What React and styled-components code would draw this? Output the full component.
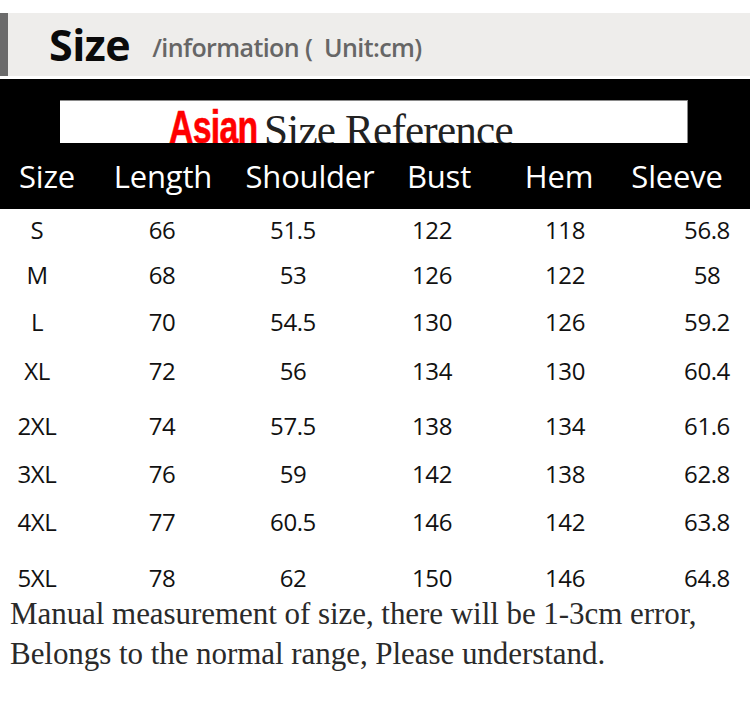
import React from "react";
import styled, { createGlobalStyle } from "styled-components";

const Global = createGlobalStyle`
  html, body { margin: 0; padding: 0; background: #ffffff; }
  body { width: 750px; overflow: hidden; }
`;

const Page = styled.div`
  width: 750px;
  height: 707px;
  background: #ffffff;
  display: flex;
  flex-direction: column;
`;

const TitleBar = styled.div`
  margin-top: 13px;
  height: 63px;
  display: flex;
  align-items: center;
  background: #eeedeb;
  border-left: 8px solid #6b6b6b;
  padding-left: 41px;
  box-sizing: border-box;
`;

const TitleMain = styled.span`
  font-family: "Open Sans", "Noto Sans", sans-serif;
  font-weight: 700;
  font-size: 43px;
  color: #0a0a0a;
  letter-spacing: -0.5px;
`;

const TitleSub = styled.span`
  margin-left: 22px;
  font-family: "Open Sans", "Noto Sans", sans-serif;
  font-weight: 600;
  font-size: 25px;
  color: #666666;
  white-space: pre;
  padding-top: 4px;
  letter-spacing: -0.6px;
`;

const BlackPanel = styled.div`
  margin-top: 3px;
  height: 130px;
  background: #000000;
  display: flex;
  flex-direction: column;
  padding-top: 21px;
  box-sizing: border-box;
`;

const Banner = styled.div`
  margin-left: 60px;
  width: 628px;
  height: 43px;
  background: #ffffff;
  border-top: 1px solid #8a8a8a;
  border-right: 1px solid #8a8a8a;
  box-sizing: border-box;
  overflow: hidden;
  display: flex;
  align-items: flex-end;
  padding-left: 109px;
  line-height: 1;
`;

const BannerAccent = styled.span`
  font-family: "Liberation Sans", "Arial", sans-serif;
  font-weight: 700;
  font-size: 47px;
  color: #ff0000;
  letter-spacing: -1px;
  display: inline-block;
  transform: scaleX(0.72);
  transform-origin: left bottom;
  margin-right: -36px;
  margin-bottom: -7px;
  -webkit-text-stroke: 0.6px #ff0000;
`;

const BannerText = styled.span`
  font-family: "Liberation Serif", "Times New Roman", serif;
  font-size: 44px;
  color: #222222;
  margin-left: 8px;
  margin-bottom: -10px;
  letter-spacing: -0.8px;
  display: inline-block;
  transform: scaleX(0.98);
  transform-origin: left bottom;
`;

const HeaderRow = styled.div`
  height: 66px;
  display: grid;
  grid-template-columns: 94px 138px 156px 102px 138px 98px;
  align-items: center;
  box-sizing: border-box;
`;

const HeaderCell = styled.div`
  font-family: "Open Sans", "Noto Sans", sans-serif;
  font-weight: 500;
  font-size: 31px;
  color: #ffffff;
  text-align: center;
  white-space: nowrap;
  letter-spacing: -0.2px;
`;

const Body = styled.div`
  display: flex;
  flex-direction: column;
`;

const DataRow = styled.div`
  margin-top: ${(p) => p.$offset}px;
  height: 30px;
  display: grid;
  grid-template-columns: 74px 176px 86px 192px 74px 62px 86px;
  align-items: center;
`;

const DataCell = styled.div`
  font-family: "Open Sans", "Noto Sans", sans-serif;
  font-weight: 500;
  font-size: 24px;
  color: #111111;
  text-align: center;
  white-space: nowrap;
  letter-spacing: -0.4px;
  &:last-child {
    grid-column: 7;
  }
`;

const Note = styled.p`
  margin: 3px 0 0 10px;
  font-family: "Liberation Serif", "Times New Roman", serif;
  font-size: 31px;
  line-height: 40px;
  color: #2a2a2a;
  letter-spacing: -0.05px;
  white-space: nowrap;
`;

const headers = ["Size", "Length", "Shoulder", "Bust", "Hem", "Sleeve"];

const rows = [
  { offset: 4, cells: ["S", "66", "51.5", "122", "118", "56.8"] },
  { offset: 15, cells: ["M", "68", "53", "126", "122", "58"] },
  { offset: 17, cells: ["L", "70", "54.5", "130", "126", "59.2"] },
  { offset: 19, cells: ["XL", "72", "56", "134", "130", "60.4"] },
  { offset: 25, cells: ["2XL", "74", "57.5", "138", "134", "61.6"] },
  { offset: 18, cells: ["3XL", "76", "59", "142", "138", "62.8"] },
  { offset: 18, cells: ["4XL", "77", "60.5", "146", "142", "63.8"] },
  { offset: 26, cells: ["5XL", "78", "62", "150", "146", "64.8"] },
];

export default function App() {
  return (
    <Page>
      <Global />
      <TitleBar>
        <TitleMain>Size</TitleMain>
        <TitleSub>{"/information (  Unit:cm)"}</TitleSub>
      </TitleBar>
      <BlackPanel>
        <Banner>
          <BannerAccent>Asian</BannerAccent>
          <BannerText>Size Reference</BannerText>
        </Banner>
        <HeaderRow>
          {headers.map((h) => (
            <HeaderCell key={h}>{h}</HeaderCell>
          ))}
        </HeaderRow>
      </BlackPanel>
      <Body>
        {rows.map((r) => (
          <DataRow key={r.cells[0]} $offset={r.offset}>
            {r.cells.map((c, i) => (
              <DataCell key={i}>{c}</DataCell>
            ))}
          </DataRow>
        ))}
      </Body>
      <Note>
        Manual measurement of size, there will be 1-3cm error,
        <br />
        Belongs to the normal range, Please understand.
      </Note>
    </Page>
  );
}
